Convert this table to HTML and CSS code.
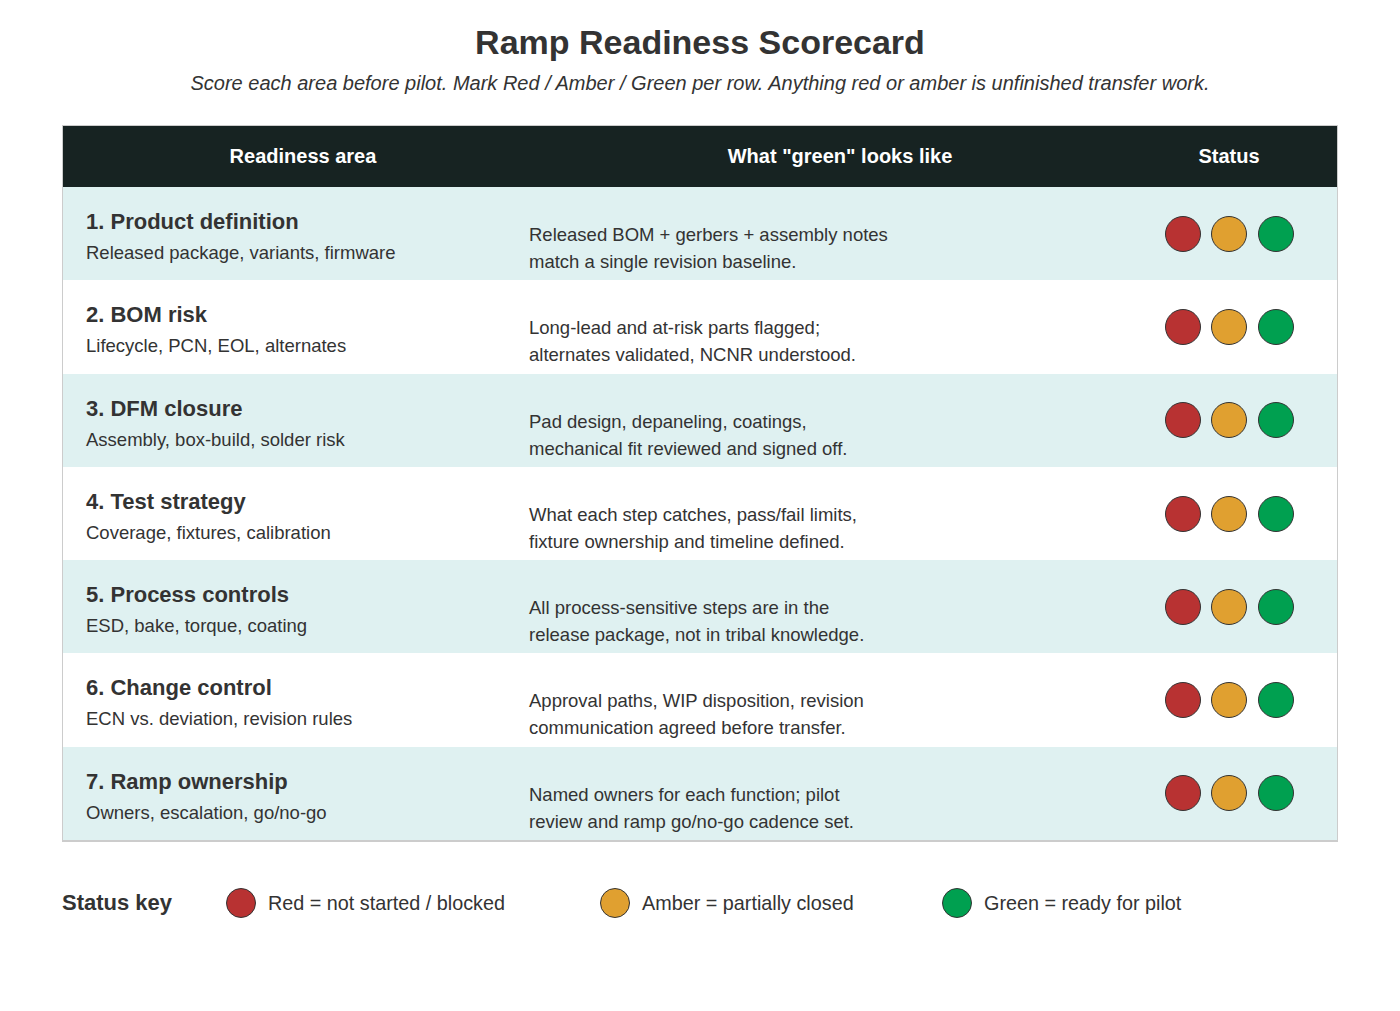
FILE: index.html
```html
<!DOCTYPE html>
<html lang="en">
<head>
<meta charset="utf-8">
<title>Ramp Readiness Scorecard</title>
<link rel="stylesheet" href="styles.css">
</head>
<body>
<div class="page">
  <h1 class="title">Ramp Readiness Scorecard</h1>
  <p class="subtitle">Score each area before pilot. Mark Red / Amber / Green per row. Anything red or amber is unfinished transfer work.</p>

  <div class="table">
    <div class="thead">
      <div class="th th-area">Readiness area</div>
      <div class="th th-green">What "green" looks like</div>
      <div class="th th-status">Status</div>
    </div>

    <div class="row tint">
      <div class="area"><div class="area-title">1. Product definition</div><div class="area-sub">Released package, variants, firmware</div></div>
      <div class="desc">Released BOM + gerbers + assembly notes<br>match a single revision baseline.</div>
      <div class="status"><span class="dot red"></span><span class="dot amber"></span><span class="dot green"></span></div>
    </div>
    <div class="row">
      <div class="area"><div class="area-title">2. BOM risk</div><div class="area-sub">Lifecycle, PCN, EOL, alternates</div></div>
      <div class="desc">Long-lead and at-risk parts flagged;<br>alternates validated, NCNR understood.</div>
      <div class="status"><span class="dot red"></span><span class="dot amber"></span><span class="dot green"></span></div>
    </div>
    <div class="row tint">
      <div class="area"><div class="area-title">3. DFM closure</div><div class="area-sub">Assembly, box-build, solder risk</div></div>
      <div class="desc">Pad design, depaneling, coatings,<br>mechanical fit reviewed and signed off.</div>
      <div class="status"><span class="dot red"></span><span class="dot amber"></span><span class="dot green"></span></div>
    </div>
    <div class="row">
      <div class="area"><div class="area-title">4. Test strategy</div><div class="area-sub">Coverage, fixtures, calibration</div></div>
      <div class="desc">What each step catches, pass/fail limits,<br>fixture ownership and timeline defined.</div>
      <div class="status"><span class="dot red"></span><span class="dot amber"></span><span class="dot green"></span></div>
    </div>
    <div class="row tint">
      <div class="area"><div class="area-title">5. Process controls</div><div class="area-sub">ESD, bake, torque, coating</div></div>
      <div class="desc">All process-sensitive steps are in the<br>release package, not in tribal knowledge.</div>
      <div class="status"><span class="dot red"></span><span class="dot amber"></span><span class="dot green"></span></div>
    </div>
    <div class="row">
      <div class="area"><div class="area-title">6. Change control</div><div class="area-sub">ECN vs. deviation, revision rules</div></div>
      <div class="desc">Approval paths, WIP disposition, revision<br>communication agreed before transfer.</div>
      <div class="status"><span class="dot red"></span><span class="dot amber"></span><span class="dot green"></span></div>
    </div>
    <div class="row tint">
      <div class="area"><div class="area-title">7. Ramp ownership</div><div class="area-sub">Owners, escalation, go/no-go</div></div>
      <div class="desc">Named owners for each function; pilot<br>review and ramp go/no-go cadence set.</div>
      <div class="status"><span class="dot red"></span><span class="dot amber"></span><span class="dot green"></span></div>
    </div>
  </div>

  <div class="legend">
    <div class="legend-label">Status key</div>
    <div class="legend-item"><span class="kdot red"></span><span>Red = not started / blocked</span></div>
    <div class="legend-item"><span class="kdot amber"></span><span>Amber = partially closed</span></div>
    <div class="legend-item"><span class="kdot green"></span><span>Green = ready for pilot</span></div>
  </div>
</div>
</body>
</html>
```

FILE: styles.css
```css
* { box-sizing: border-box; }

body {
  margin: 0;
  background: #ffffff;
  font-family: "Liberation Sans", Arial, sans-serif;
  color: #333333;
}

.page {
  padding: 0 62px;
}

.title {
  margin: 22px 0 0;
  font-size: 34px;
  line-height: 40px;
  font-weight: bold;
  text-align: center;
  color: #333333;
}

.subtitle {
  margin: 9px 0 0;
  font-size: 20px;
  line-height: 24px;
  font-style: italic;
  text-align: center;
  color: #333333;
}

.table {
  margin-top: 30px;
  width: 1276px;
  border: 1px solid #cccccc;
  border-bottom-width: 2px;
}

.thead {
  display: grid;
  grid-template-columns: 480px 594px 184px;
  height: 61px;
  background: #172322;
  align-items: center;
}

.th {
  color: #ffffff;
  font-weight: bold;
  font-size: 20px;
  text-align: center;
}

.row {
  display: grid;
  grid-template-columns: 466px 592px 216px;
  height: 93.3px;
  background: #ffffff;
}

.row.tint {
  background: #dff1f1;
}

.area {
  padding: 22px 0 0 23px;
}

.area-title {
  font-size: 22px;
  line-height: 26px;
  font-weight: bold;
  color: #333333;
}

.area-sub {
  margin-top: 5px;
  font-size: 18.5px;
  line-height: 26px;
  color: #333333;
}

.desc {
  padding-top: 34px;
  font-size: 18.5px;
  line-height: 27px;
  color: #333333;
}

.status {
  display: flex;
  justify-content: center;
  align-items: center;
  gap: 10.5px;
}

.dot {
  width: 36px;
  height: 36px;
  border-radius: 50%;
  border: 1.6px solid #333333;
}

.red { background: #b83232; }
.amber { background: #e0a030; }
.green { background: #00a050; }

.legend {
  display: grid;
  grid-template-columns: 164px 374px 342px auto;
  align-items: center;
  margin-top: 46px;
  height: 30px;
}

.legend-label {
  font-size: 22px;
  font-weight: bold;
  color: #333333;
}

.legend-item {
  display: flex;
  align-items: center;
  gap: 12px;
  font-size: 19.8px;
  color: #333333;
}

.kdot {
  width: 30px;
  height: 30px;
  border-radius: 50%;
  border: 1.6px solid #333333;
  flex: none;
}
```
